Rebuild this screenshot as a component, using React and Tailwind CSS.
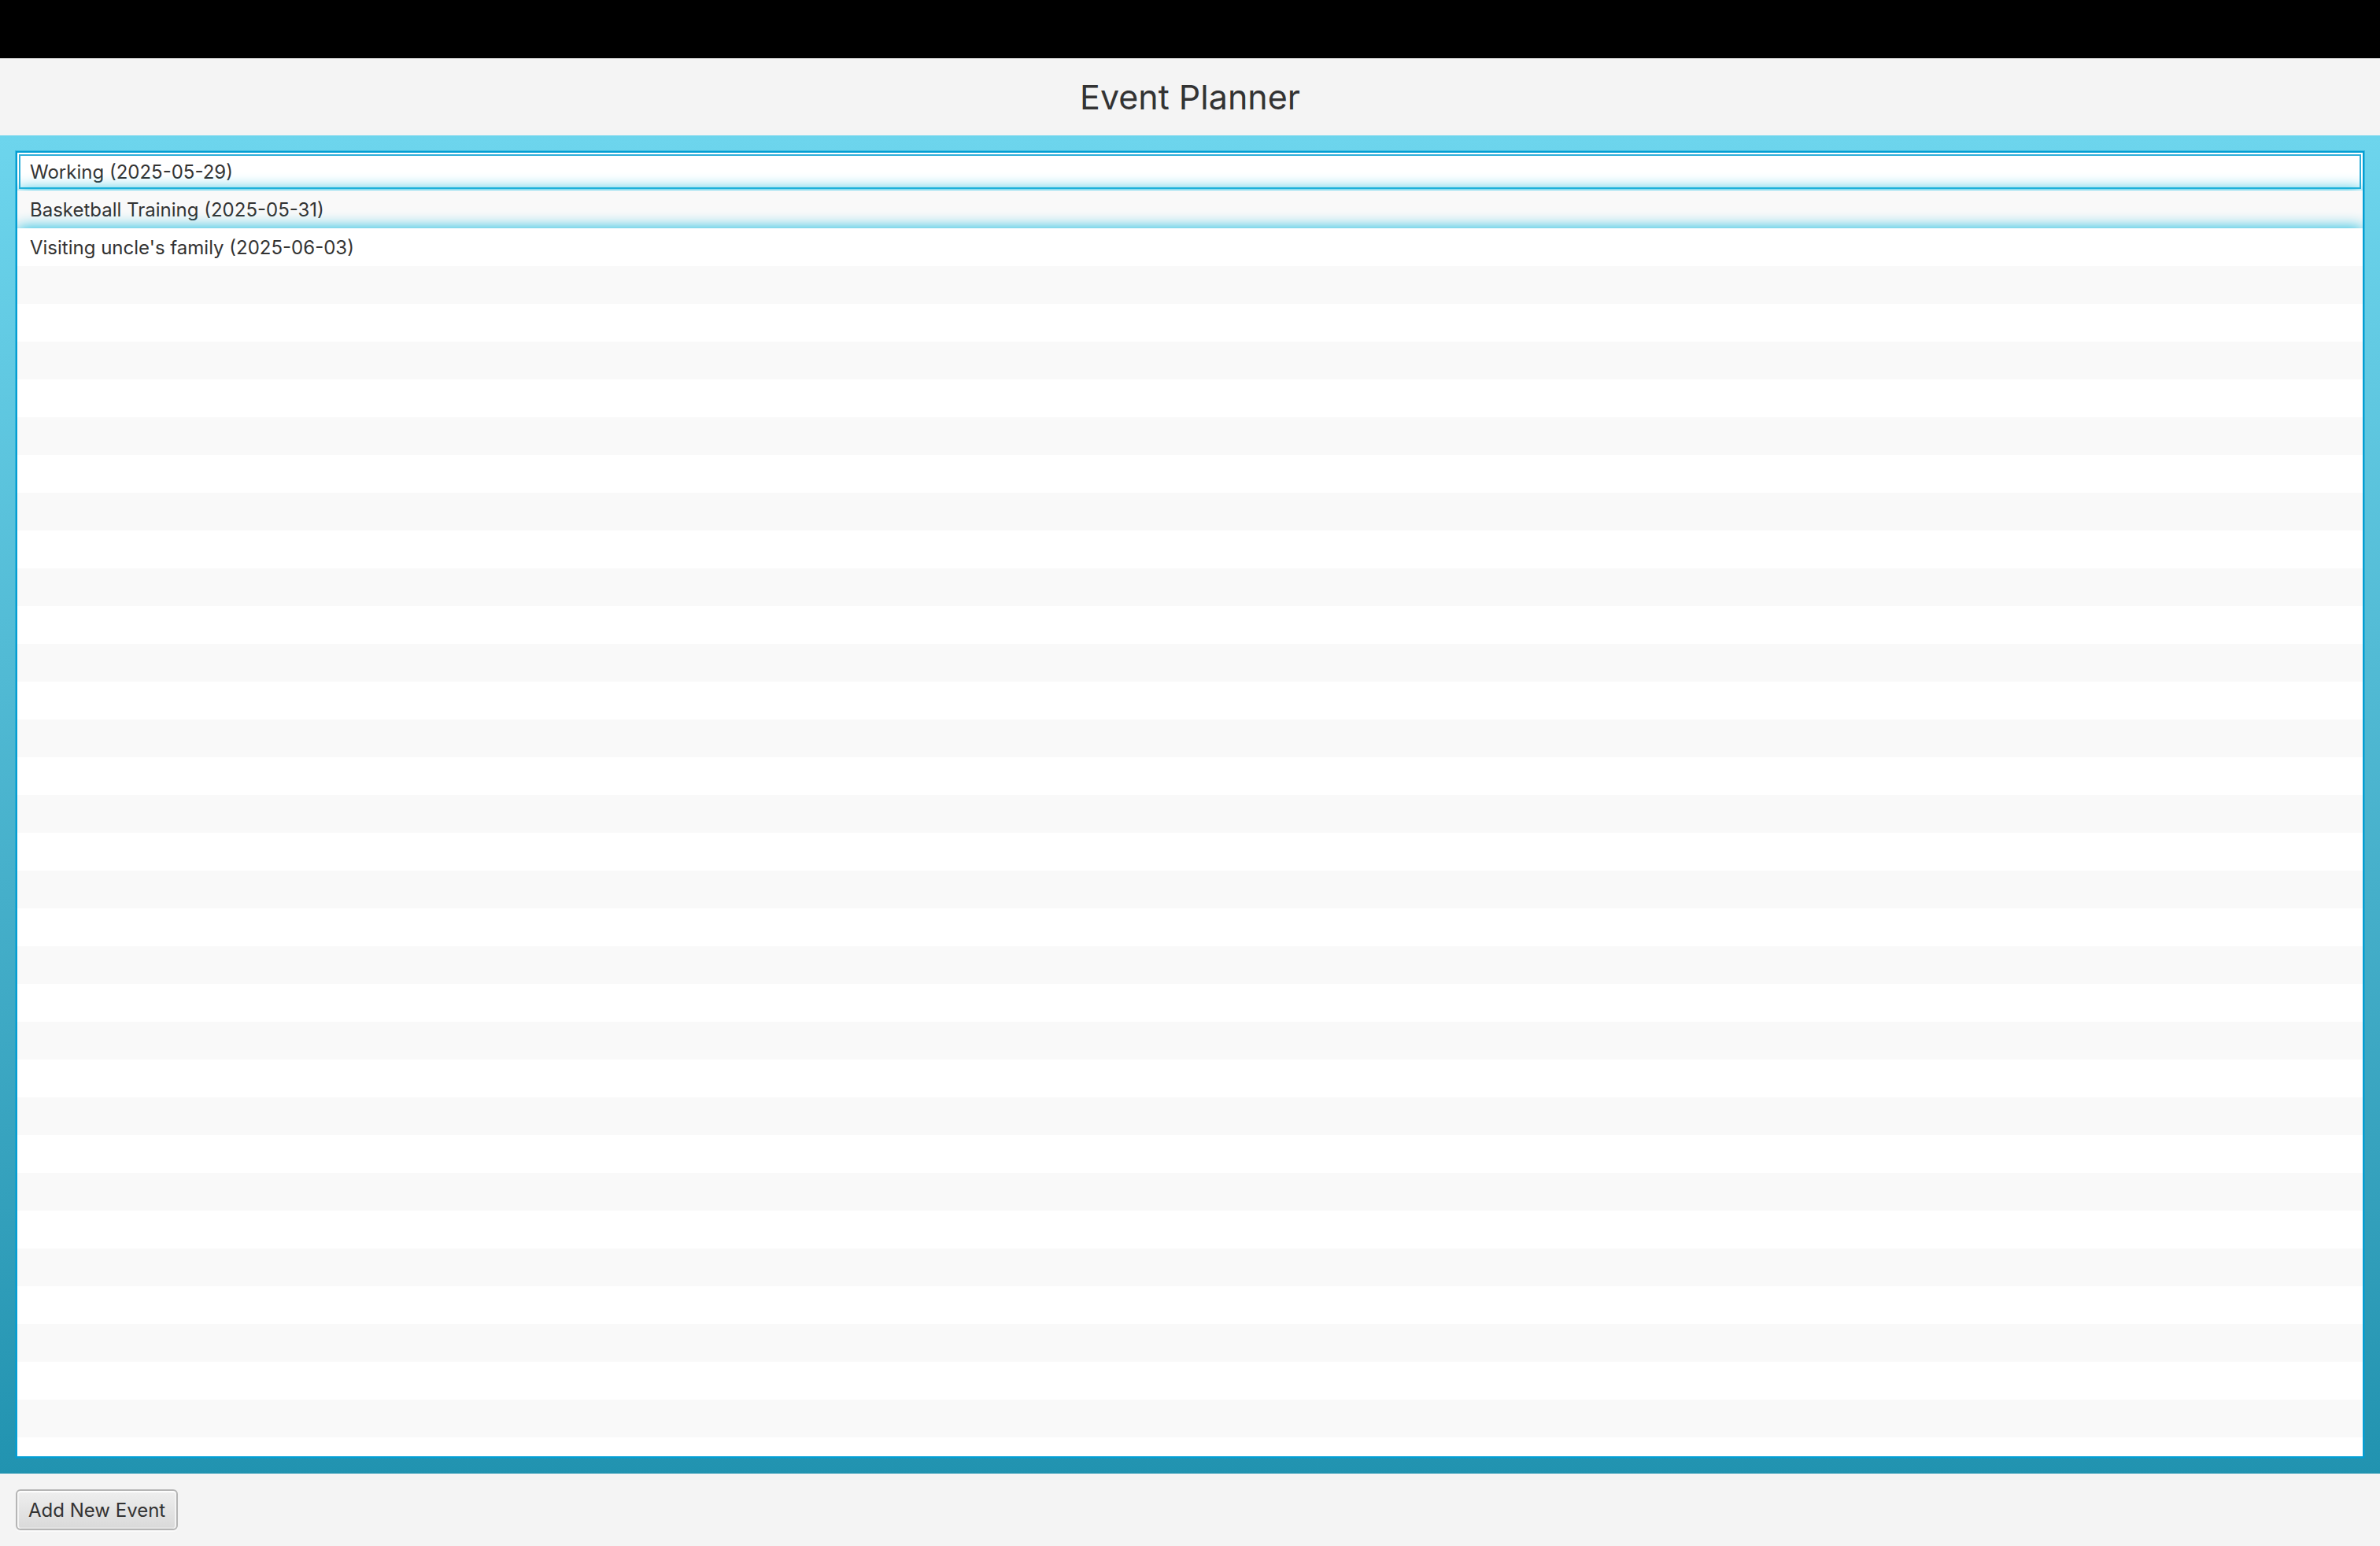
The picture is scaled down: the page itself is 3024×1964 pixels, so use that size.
const events = [
  { title: "Working", date: "2025-05-29" },
  { title: "Basketball Training", date: "2025-05-31" },
  { title: "Visiting uncle's family", date: "2025-06-03" },
];

const FILLER_ROWS = 32;

function EventRow({ event, focused }) {
  return (
    <li className="relative h-12 shrink-0 bg-white shadow-[0_0_20px_#00b4db] even:bg-[#f9f9f9]">
      <button
        type="button"
        className={
          focused
            ? "m-0.5 flex h-11 w-[calc(100%-4px)] items-center border-2 border-[#2fafd9] px-3 pt-0.5 text-left"
            : "flex h-12 w-full items-center px-4 pt-0.5 text-left"
        }
      >
        {event.title} ({event.date})
      </button>
    </li>
  );
}

export default function App() {
  return (
    <div className="flex h-screen flex-col bg-[#f4f4f4] font-['Inter',sans-serif] text-2xl text-[#333333]">
      <div className="h-[74px] shrink-0 bg-black" />
      <header className="shrink-0 p-5 text-center">
        <h1 className="text-[43px] leading-[58px]">Event Planner</h1>
      </header>
      <main className="flex min-h-0 flex-1 flex-col bg-linear-to-b from-[#6dd5ed] to-[#2193b0] p-5">
        <ul className="flex min-h-0 flex-1 flex-col overflow-hidden border-2 border-[#039ed3] bg-white shadow-[0_0_0_1px_rgba(3,158,211,0.45)]">
          {events.map((event, i) => (
            <EventRow key={event.title} event={event} focused={i === 0} />
          ))}
          {Array.from({ length: FILLER_ROWS }, (_, i) => (
            <li key={i} aria-hidden="true" className="relative h-12 shrink-0 bg-white even:bg-[#f9f9f9]" />
          ))}
        </ul>
      </main>
      <footer className="flex shrink-0 p-5">
        <button
          type="button"
          className="h-[52px] rounded-md border-2 border-[#b5b5b5] bg-linear-to-b from-[#efefef] to-[#d9d9d9] px-3.5 pt-0.5 shadow-[inset_0_2px_0_#fdfdfd,inset_2px_0_0_#f4f4f4,inset_-2px_0_0_#f4f4f4,inset_0_-2px_0_#e2e2e2,0_2px_0_#fafafa]"
        >
          Add New Event
        </button>
      </footer>
    </div>
  );
}
